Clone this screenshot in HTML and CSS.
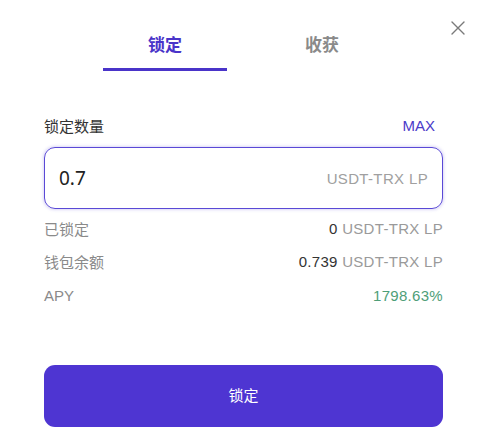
FILE: index.html
```html
<!DOCTYPE html>
<html lang="zh">
<head>
<meta charset="utf-8">
<title>锁定</title>
<link rel="stylesheet" href="styles.css">
</head>
<body>
<div class="modal">
  <button class="close" aria-label="关闭">
    <svg viewBox="0 0 14 14" width="14" height="14"><path d="M1 1 L13 13 M13 1 L1 13" stroke="#7a7a7a" stroke-width="1.4" fill="none" stroke-linecap="round"/></svg>
  </button>
  <div class="tabs">
    <div class="tab active"><span class="tab-text">锁定</span><span class="tab-bar"></span></div>
    <div class="tab"><span class="tab-text">收获</span><span class="tab-bar"></span></div>
  </div>
  <div class="content">
    <div class="label-row">
      <span class="label">锁定数量</span>
      <span class="max">MAX</span>
    </div>
    <div class="input-box">
      <span class="value">0.7</span>
      <span class="unit">USDT-TRX LP</span>
    </div>
    <div class="rows">
      <div class="row"><span class="key">已锁定</span><span class="val"><b>0</b> USDT-TRX LP</span></div>
      <div class="row"><span class="key">钱包余额</span><span class="val"><b>0.739</b> USDT-TRX LP</span></div>
      <div class="row"><span class="key">APY</span><span class="val green">1798.63%</span></div>
    </div>
    <button class="submit">锁定</button>
  </div>
</div>
</body>
</html>
```
FILE: styles.css
```css
* { box-sizing: border-box; }
html, body { margin: 0; padding: 0; background: #fff; }
body {
  font-family: "Liberation Sans", "Noto Sans CJK SC", sans-serif;
  color: #333;
  width: 486px;
  height: 444px;
  overflow: hidden;
}
.modal { position: relative; width: 486px; height: 444px; }
.close {
  position: absolute;
  top: 21px;
  right: 21px;
  width: 14px;
  height: 14px;
  padding: 0;
  border: 0;
  background: none;
  display: block;
}
.close svg { display: block; }
.tabs {
  display: flex;
  gap: 33px;
  padding-left: 103px;
  padding-top: 32px;
}
.tab {
  width: 124px;
  display: flex;
  flex-direction: column;
  align-items: center;
}
.tab-text {
  font-family: "Noto Sans CJK SC", sans-serif;
  font-size: 17px;
  line-height: 24px;
  font-weight: 700;
  color: #8a8a8a;
}
.tab-bar {
  margin-top: 12px;
  width: 124px;
  height: 3px;
  background: transparent;
}
.tab.active .tab-text { color: #4a34c9; }
.tab.active .tab-bar { background: #4a34c9; }
.content { padding: 44px 43px 0 44px; }
.label-row {
  display: flex;
  justify-content: space-between;
  align-items: center;
  height: 20px;
  padding-right: 8px;
}
.label {
  font-family: "Noto Sans CJK SC", sans-serif;
  font-size: 15px;
  color: #333;
}
.max {
  font-size: 15px;
  color: #4b3bc9;
}
.input-box {
  margin-top: 12px;
  height: 62px;
  border: 1.5px solid #5a49d6;
  border-radius: 11px;
  box-shadow: 0 0 3px 1px rgba(90, 73, 214, 0.22);
  display: flex;
  align-items: center;
  justify-content: space-between;
  padding: 0 14px 0 14px;
}
.value {
  font-family: "Noto Sans", sans-serif;
  font-size: 19px;
  color: #222;
}
.unit {
  font-size: 15px;
  letter-spacing: 0.35px;
  color: #a0a0a0;
}
.rows {
  margin-top: 9px;
  display: flex;
  flex-direction: column;
  gap: 13.5px;
}
.row {
  display: flex;
  justify-content: space-between;
  align-items: center;
  height: 20px;
  font-size: 15px;
}
.key {
  font-family: "Liberation Sans", "Noto Sans CJK SC", sans-serif;
  color: #8a8a8a;
}
.val { color: #9a9a9a; letter-spacing: 0.3px; }
.val b { font-weight: 400; color: #333; }
.val.green { color: #4e9e78; }
.submit {
  margin-top: 60px;
  width: 100%;
  height: 62px;
  padding: 0 0 3px;
  border: 0;
  border-radius: 11px;
  background: #4e35d2;
  color: #fff;
  font-family: "Noto Sans CJK SC", sans-serif;
  font-size: 15px;
  display: block;
}
```
